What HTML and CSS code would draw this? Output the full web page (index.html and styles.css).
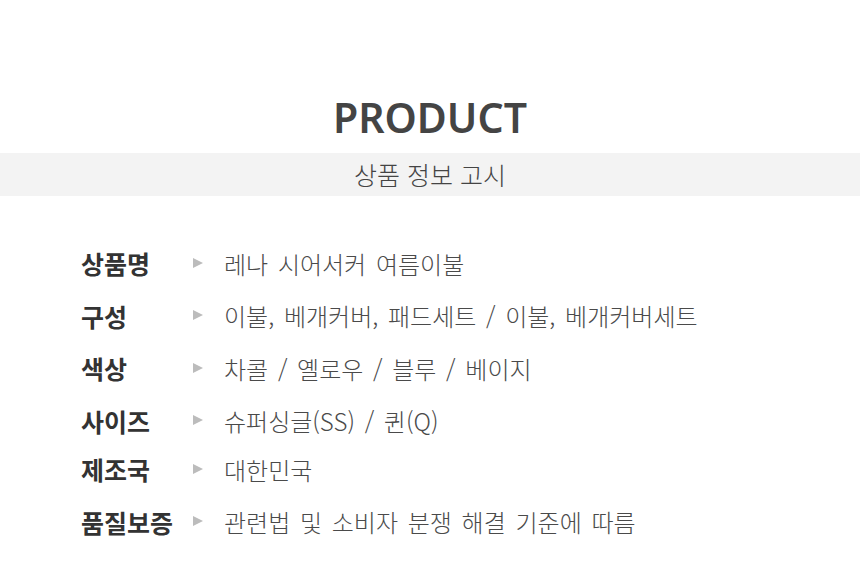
FILE: index.html
```html
<!DOCTYPE html>
<html lang="ko">
<head>
<meta charset="utf-8">
<link rel="stylesheet" href="styles.css">
</head>
<body>
<div class="page">
  <h1 class="title">PRODUCT</h1>
  <div class="band">상품 정보 고시</div>
  <dl class="info">
    <div class="row"><dt>상품명</dt><dd><span class="tri"></span>레나 시어서커 여름이불</dd></div>
    <div class="row"><dt>구성</dt><dd><span class="tri"></span>이불, 베개커버, 패드세트 / 이불, 베개커버세트</dd></div>
    <div class="row"><dt>색상</dt><dd><span class="tri"></span>차콜 / 옐로우 / 블루 / 베이지</dd></div>
    <div class="row"><dt>사이즈</dt><dd><span class="tri"></span>슈퍼싱글(SS) / 퀸(Q)</dd></div>
    <div class="row r5"><dt>제조국</dt><dd><span class="tri"></span>대한민국</dd></div>
    <div class="row"><dt>품질보증</dt><dd><span class="tri"></span>관련법 및 소비자 분쟁 해결 기준에 따름</dd></div>
  </dl>
</div>
</body>
</html>
```

FILE: styles.css
```css
* { box-sizing: border-box; }
html, body { margin: 0; padding: 0; background: #fff; }
body { font-family: "Noto Sans CJK KR", "Noto Sans", sans-serif; }
.page { width: 860px; height: 588px; overflow: hidden; }
.title {
  margin: 0;
  padding-top: 93px;
  height: 153px;
  text-align: center;
  font-family: "Noto Sans", sans-serif;
  font-weight: 600;
  font-size: 41px;
  line-height: 48px;
  color: #444;
}
.band {
  height: 43px;
  background: #f3f3f3;
  text-align: center;
  font-size: 25px;
  line-height: 43px;
  font-weight: 300;
  color: #444;
}
.info { margin: 41px 0 0 81px; padding: 0; }
.row { display: flex; align-items: center; height: 52.5px; }
.row.r5 { margin-top: -4px; }
dt {
  width: 112px;
  font-size: 25px;
  font-weight: 700;
  color: #333;
}
dd {
  margin: 0;
  display: flex;
  align-items: center;
  font-size: 24px;
  word-spacing: 3px;
  font-weight: 300;
  color: #4a4a4a;
}
.tri {
  width: 0; height: 0;
  border-left: 10px solid #bcbcbc;
  border-top: 5.5px solid transparent;
  border-bottom: 5.5px solid transparent;
  margin-right: 21px;
  margin-top: -1px;
}
```
